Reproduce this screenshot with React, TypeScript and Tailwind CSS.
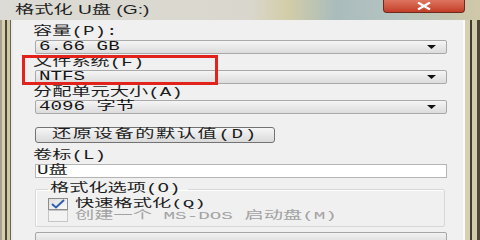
import type { ReactNode } from 'react';

// stretched text, the screenshot is widened horizontally
function S({ children, className = '', wide }: { children: ReactNode; className?: string; wide?: boolean }) {
  return (
    <span
      className={`inline-block origin-left whitespace-nowrap leading-none ${wide ? 'scale-x-[1.75]' : 'scale-x-[1.6]'} ${className}`}
    >
      {children}
    </span>
  );
}

const mono = "font-['Liberation_Mono','Noto_Sans_CJK_SC',monospace] text-[12px]";
const monoSm = "font-['Liberation_Mono','Noto_Sans_CJK_SC',monospace] text-[11px] leading-[11px]";

function Label({ children }: { children: ReactNode }) {
  return (
    <div className={`-ml-[2px] flex h-[14px] items-center text-[#1c1c1c] ${mono}`}>
      <S>{children}</S>
    </div>
  );
}

function Combo({ value }: { value: string }) {
  return (
    <div className="flex h-[14px] w-[412px] items-center justify-between rounded-[2px] border border-[#a9a9a9] bg-gradient-to-b from-[#f5f5f5] to-[#dcdcdc] pl-[3px] pr-[10px]">
      <span className={`text-[#151515] ${mono}`}>
        <S>{value}</S>
      </span>
      <svg width="9" height="4" viewBox="0 0 9 4">
        <path d="M0 0h9L4.5 4z" fill="#111" />
      </svg>
    </div>
  );
}

function Check({ on, disabled }: { on?: boolean; disabled?: boolean }) {
  return (
    <div
      className={
        disabled
          ? 'h-[12px] w-[20px] shrink-0 border border-[#c6c6c6] bg-[#f3f3f3]'
          : 'flex h-[12px] w-[20px] shrink-0 items-center justify-center border border-[#8c8c8c] bg-gradient-to-br from-[#dedede] to-[#fbfbfb]'
      }
    >
      {on && (
        <svg width="16" height="10" viewBox="0 0 16 10">
          <path d="M2 5l4 3.5L14 1" fill="none" stroke="#2d5db0" strokeWidth="2" />
        </svg>
      )}
    </div>
  );
}

export default function App() {
  return (
    <div className="relative flex h-[240px] w-[480px] flex-col overflow-hidden bg-[#d3cbae]">
      {/* title bar */}
      <div className="flex h-[20px] shrink-0 items-start justify-between bg-[linear-gradient(to_right,#dcdbd5_0%,#d9d7cd_52%,#d3cda8_60%,#a9bcbc_70%,#b4c3c0_82%,#d0c8a8_100%)] pl-[15px] pr-[15px]">
        <div className="flex h-[20px] items-center font-['Liberation_Sans','Noto_Sans_CJK_SC',sans-serif] text-[12px] text-[#1e1e1e]">
          <S>格式化 U盘 (G:)</S>
        </div>
        <div className="flex h-[13px] w-[82px] items-center justify-center rounded-b-[4px] border border-t-0 border-[#6e2a1e] bg-gradient-to-b from-[#dd7560] to-[#c33c26]">
          <svg width="16" height="8" viewBox="0 0 16 8">
            <path d="M2 0.5l12 7M14 0.5l-12 7" stroke="#fff" strokeWidth="2.2" />
          </svg>
        </div>
      </div>

      {/* body */}
      <div className="flex min-h-0 flex-1">
        <div className="w-[13px] shrink-0 bg-[linear-gradient(to_right,#a8a28c_0_2px,#d6cfb0_2px_5px,#4c4838_5px_7px,#cfc8a6_7px_10px,#6a6452_10px_11px,#e9e9e6_11px)]" />

        <div className="flex min-w-0 flex-1 flex-col bg-[#f0f0f0] pl-[22px] pr-[16px]">
          <div className="mt-[5px]">
            <Label>容量(P):</Label>
          </div>
          <div className="mt-[1px]">
            <Combo value="6.66 GB" />
          </div>
          <div className="mt-[2px]">
            <Label>文件系统(F)</Label>
          </div>
          <Combo value="NTFS" />
          <div className="mt-[2px]">
            <Label>分配单元大小(A)</Label>
          </div>
          <Combo value="4096 字节" />

          <div className="mt-[13px] flex h-[16px] w-[240px] items-center rounded-[3px] border border-[#737373] bg-gradient-to-b from-[#f6f6f6] to-[#dadada] pl-[16px]">
            <span className={`tracking-[1px] text-[#1c1c1c] ${mono}`}>
              <S>还原设备的默认值(D)</S>
            </span>
          </div>

          <div className="mt-[6px]">
            <Label>卷标(L)</Label>
          </div>
          <div className="mt-[1px] flex h-[14px] w-[412px] items-center border border-[#b5b5b5] bg-white pl-[1px]">
            <span className={`text-[#1c1c1c] ${mono}`}>
              <S>U盘</S>
            </span>
          </div>

          <fieldset className="mt-[4px] w-[410px] rounded-[2px] border border-[#d7d7d7] pb-[4px] pl-[12px] shadow-[inset_1px_1px_0_#fff]">
            <legend className={`flex h-[14px] w-[140px] items-center px-[2px] text-[#1c1c1c] ${mono}`}>
              <S>格式化选项(O)</S>
            </legend>
            <div className="mt-[2px] flex h-[12px] items-center gap-[7px]">
              <Check on />
              <span className={`text-[#1c1c1c] ${monoSm}`}>
                <S wide>快速格式化(Q)</S>
              </span>
            </div>
            <div className="flex h-[12px] items-center gap-[7px]">
              <Check disabled />
              <span className={`text-[#a2a2a2] ${monoSm}`}>
                <S wide>创建一个 MS-DOS 启动盘(M)</S>
              </span>
            </div>
          </fieldset>

          <div className="mt-[5px] h-[14px] w-[412px] shrink-0 rounded-[2px] border border-[#a6a6a6] bg-gradient-to-b from-[#f2f2f2] to-[#d8d8d8]" />
        </div>

        <div className="w-[17px] shrink-0 bg-[linear-gradient(to_right,#fbfbfa_0_2px,#d7cfb1_2px_7px,#3e3b2f_7px_9px,#d2caa8_9px_14px,#4d4535_14px)]" />
      </div>

      {/* red annotation box */}
      <div className="absolute left-[22px] top-[55px] h-[30px] w-[196px] border-[3px] border-[#e1231c]" />
    </div>
  );
}
